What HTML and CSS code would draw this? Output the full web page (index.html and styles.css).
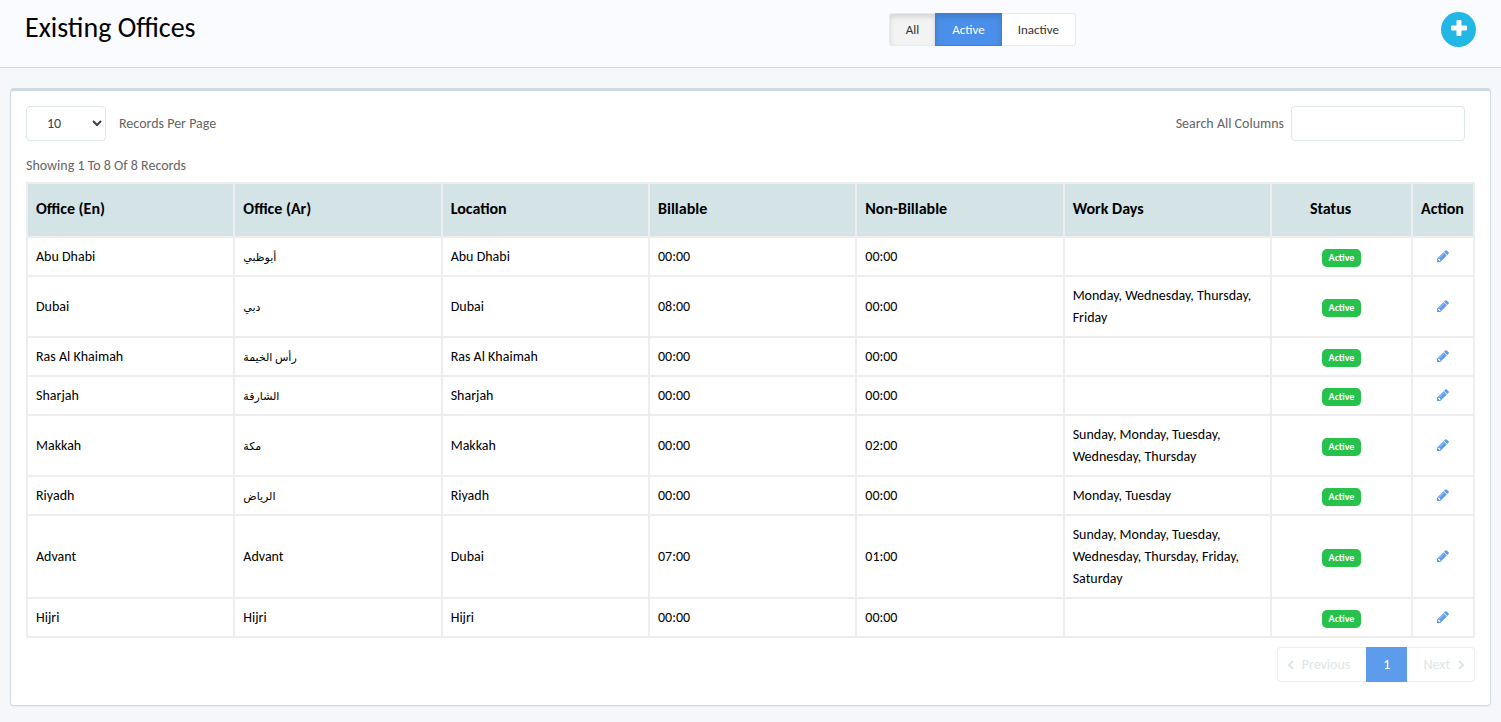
FILE: index.html
```html
<!DOCTYPE html>
<html lang="en">
<head>
  <meta charset="UTF-8" />
  <meta name="viewport" content="width=device-width, initial-scale=1" />
  <title>Existing Offices</title>
  <link rel="stylesheet" href="styles.css">
</head>
<body>

  <!-- shared icon shapes -->
  <svg class="sprite" aria-hidden="true">
    <symbol id="pencil" viewBox="0 0 1536 1536">
      <path d="M363 1408l91-91-235-235-91 91v107h128v128zM886 480q0-22-22-22-10 0-17 7l-542 542q-7 7-7 17 0 22 22 22 10 0 17-7l542-542q7-7 7-17zM832 288l416 416-832 832H0v-416zM1515 384q0 53-37 90l-166 166-416-416 166-165q36-38 90-38 53 0 91 38l235 234q37 39 37 91z"/>
    </symbol>
  </svg>

  <header class="content-header">
    <h1 class="page-title">Existing Offices</h1>
    <div class="btn-group">
      <button type="button" class="btn btn-all">All</button>
      <button type="button" class="btn btn-active">Active</button>
      <button type="button" class="btn">Inactive</button>
    </div>
    <button type="button" class="add-btn" aria-label="Add">
      <svg width="16" height="16" viewBox="0 0 16 16"><path d="M6.500 0h3q1 0 1 1v4.500h4.500q1 0 1 1v3q0 1-1 1h-4.500v4.500q0 1-1 1h-3q-1 0-1-1v-4.500h-4.500q-1 0-1-1v-3q0-1 1-1h4.500v-4.500q0-1 1-1z"/></svg>
    </button>
  </header>

  <main class="card">
    <div class="toolbar">
      <div class="page-size">
        <select id="pageSize" class="form-control">
          <option>10</option>
        </select>
        <label for="pageSize">Records Per Page</label>
      </div>
      <div class="search">
        <label for="search">Search All Columns</label>
        <input type="text" id="search" class="form-control">
      </div>
    </div>

    <p class="summary">Showing 1 To 8 Of 8 Records</p>

    <table class="offices">
      <thead>
        <tr>
          <th>Office (En)</th>
          <th>Office (Ar)</th>
          <th>Location</th>
          <th>Billable</th>
          <th>Non-Billable</th>
          <th>Work Days</th>
          <th class="col-status">Status</th>
          <th class="col-action">Action</th>
        </tr>
      </thead>
      <tbody>
        <tr>
          <td>Abu Dhabi</td>
          <td><span class="ar" lang="ar">أبوظبي</span></td>
          <td>Abu Dhabi</td>
          <td>00:00</td>
          <td>00:00</td>
          <td></td>
          <td class="center"><span class="badge">Active</span></td>
          <td class="center"><a href="#" class="edit" aria-label="Edit"><svg><use href="#pencil"/></svg></a></td>
        </tr>
        <tr>
          <td>Dubai</td>
          <td><span class="ar" lang="ar">دبي</span></td>
          <td>Dubai</td>
          <td>08:00</td>
          <td>00:00</td>
          <td>Monday, Wednesday, Thursday, Friday</td>
          <td class="center"><span class="badge">Active</span></td>
          <td class="center"><a href="#" class="edit" aria-label="Edit"><svg><use href="#pencil"/></svg></a></td>
        </tr>
        <tr>
          <td>Ras Al Khaimah</td>
          <td><span class="ar" lang="ar">رأس الخيمة</span></td>
          <td>Ras Al Khaimah</td>
          <td>00:00</td>
          <td>00:00</td>
          <td></td>
          <td class="center"><span class="badge">Active</span></td>
          <td class="center"><a href="#" class="edit" aria-label="Edit"><svg><use href="#pencil"/></svg></a></td>
        </tr>
        <tr>
          <td>Sharjah</td>
          <td><span class="ar" lang="ar">الشارقة</span></td>
          <td>Sharjah</td>
          <td>00:00</td>
          <td>00:00</td>
          <td></td>
          <td class="center"><span class="badge">Active</span></td>
          <td class="center"><a href="#" class="edit" aria-label="Edit"><svg><use href="#pencil"/></svg></a></td>
        </tr>
        <tr>
          <td>Makkah</td>
          <td><span class="ar" lang="ar">مكة</span></td>
          <td>Makkah</td>
          <td>00:00</td>
          <td>02:00</td>
          <td>Sunday, Monday, Tuesday, Wednesday, Thursday</td>
          <td class="center"><span class="badge">Active</span></td>
          <td class="center"><a href="#" class="edit" aria-label="Edit"><svg><use href="#pencil"/></svg></a></td>
        </tr>
        <tr>
          <td>Riyadh</td>
          <td><span class="ar" lang="ar">الرياض</span></td>
          <td>Riyadh</td>
          <td>00:00</td>
          <td>00:00</td>
          <td>Monday, Tuesday</td>
          <td class="center"><span class="badge">Active</span></td>
          <td class="center"><a href="#" class="edit" aria-label="Edit"><svg><use href="#pencil"/></svg></a></td>
        </tr>
        <tr>
          <td>Advant</td>
          <td>Advant</td>
          <td>Dubai</td>
          <td>07:00</td>
          <td>01:00</td>
          <td>Sunday, Monday, Tuesday, Wednesday, Thursday, Friday, Saturday</td>
          <td class="center"><span class="badge">Active</span></td>
          <td class="center"><a href="#" class="edit" aria-label="Edit"><svg><use href="#pencil"/></svg></a></td>
        </tr>
        <tr>
          <td>Hijri</td>
          <td>Hijri</td>
          <td>Hijri</td>
          <td>00:00</td>
          <td>00:00</td>
          <td></td>
          <td class="center"><span class="badge">Active</span></td>
          <td class="center"><a href="#" class="edit" aria-label="Edit"><svg><use href="#pencil"/></svg></a></td>
        </tr>
      </tbody>
    </table>

    <nav class="pagination" aria-label="Pages">
      <a href="#" class="page-link">
        <svg width="6" height="10" viewBox="0 0 6 10"><path d="M5 1L1 5l4 4"/></svg>
        Previous
      </a>
      <a href="#" class="page-link current">1</a>
      <a href="#" class="page-link">
        Next
        <svg width="6" height="10" viewBox="0 0 6 10"><path d="M1 1l4 4-4 4"/></svg>
      </a>
    </nav>
  </main>

</body>
</html>
```
FILE: styles.css
```css
* {
  box-sizing: border-box;
}

body {
  margin: 0;
  background: #f5f7fb;
  color: #000;
  font-family: Carlito, Calibri, Lato, "DejaVu Sans", sans-serif;
  font-size: 14px;
  line-height: 21px;
}

button, input, select {
  font-family: inherit;
  font-size: 14px;
}

.sprite {
  display: none;
}

/* header */
.content-header {
  display: grid;
  grid-template-columns: 1fr auto 400px;
  align-items: start;
  height: 68px;
  padding: 12px 25px;
  background: #fafbfe;
  border-bottom: 1px solid #cfdbe2;
}

.page-title {
  margin: 0;
  font-size: 28px;
  font-weight: 400;
  line-height: 32px;
}

.btn-group {
  display: flex;
  margin-top: 1px;
}

.btn {
  height: 33px;
  padding: 0 16px;
  border: 1px solid #eaeaea;
  border-left: 0;
  background: #fff;
  color: #333;
  font-size: 13px;
  cursor: pointer;
}

.btn:last-child {
  border-radius: 0 3px 3px 0;
}

.btn-all {
  border-left: 1px solid #eaeaea;
  border-right: 0;
  border-radius: 3px 0 0 3px;
  background: #f3f3f3;
  box-shadow: inset 0 3px 5px rgba(0, 0, 0, 0.125);
}

.btn-active {
  border: 1px solid #3a80dd;
  background: #4a8fe9;
  color: #fff;
  box-shadow: inset 0 3px 5px rgba(0, 0, 0, 0.125);
}

.add-btn {
  display: flex;
  justify-content: center;
  justify-self: end;
  width: 35px;
  height: 35px;
  padding: 8px 0 0;
  border: 0;
  border-radius: 50%;
  background: #23b7e5;
  fill: #fff;
  cursor: pointer;
}

/* card */
.card {
  margin: 20px 10px 15px;
  padding: 15px 15px 23px;
  background: #fff;
  border: 1px solid #cfdbe2;
  border-top-width: 3px;
  border-radius: 4px;
  box-shadow: 0 1px 1px rgba(0, 0, 0, 0.05);
}

.toolbar {
  display: flex;
  justify-content: space-between;
  padding-right: 10px;
  color: #656565;
}

.page-size, .search {
  display: flex;
  align-items: center;
}

.page-size {
  gap: 13px;
}

.search {
  gap: 7px;
}

.form-control {
  height: 35px;
  border: 1px solid #dde6e9;
  border-radius: 4px;
  background: #fff;
  color: #3a3f51;
}

select.form-control {
  width: 80px;
  padding: 0 0 0 16px;
}

input.form-control {
  width: 174px;
  padding: 6px 16px;
}

.summary {
  margin: 14px 0 6px;
  color: #656565;
}

/* table */
.offices {
  width: 100%;
  table-layout: fixed;
  border-collapse: collapse;
  line-height: 22px;
}

.offices th, .offices td {
  padding: 8px 8px 7px;
  border: 2px solid #eee;
  text-align: left;
  vertical-align: middle;
}

.offices th {
  height: 54px;
  padding: 7px 8px 9px;
  background: #d4e3e6;
  font-size: 16px;
  font-weight: 700;
}

.offices .col-status {
  width: 141px;
  padding-right: 30px;
  text-align: center;
}

.offices .col-action {
  width: 62px;
}

.offices .center {
  text-align: center;
}

.ar {
  font-size: 11px;
  line-height: 16px;
}

.badge {
  display: inline-block;
  margin-top: 3px;
  padding: 0 7px;
  border-radius: 5px;
  background: #27c24c;
  color: #fff;
  font-size: 10px;
  font-weight: 700;
  line-height: 18px;
  vertical-align: top;
}

.edit svg {
  width: 12px;
  height: 12px;
  fill: #5d9cec;
  vertical-align: -1px;
}

/* pagination */
.pagination {
  display: flex;
  justify-content: flex-end;
  margin-top: 9px;
}

.page-link {
  display: flex;
  align-items: center;
  gap: 8px;
  height: 35px;
  padding: 0 16px 0 10px;
  border: 1px solid #eee;
  border-right: 0;
  color: #dde6e9;
  text-decoration: none;
}

.page-link:first-child {
  border-radius: 4px 0 0 4px;
}

.page-link:last-child {
  padding: 0 10px 0 16px;
  border-right: 1px solid #eee;
  border-left: 0;
  border-radius: 0 4px 4px 0;
}

.page-link.current {
  padding: 0 16px;
  border: 1px solid #5d9cec;
  background: #5d9cec;
  color: #fff;
}

.page-link svg {
  fill: none;
  stroke: #dde6e9;
  stroke-width: 2;
}
```
